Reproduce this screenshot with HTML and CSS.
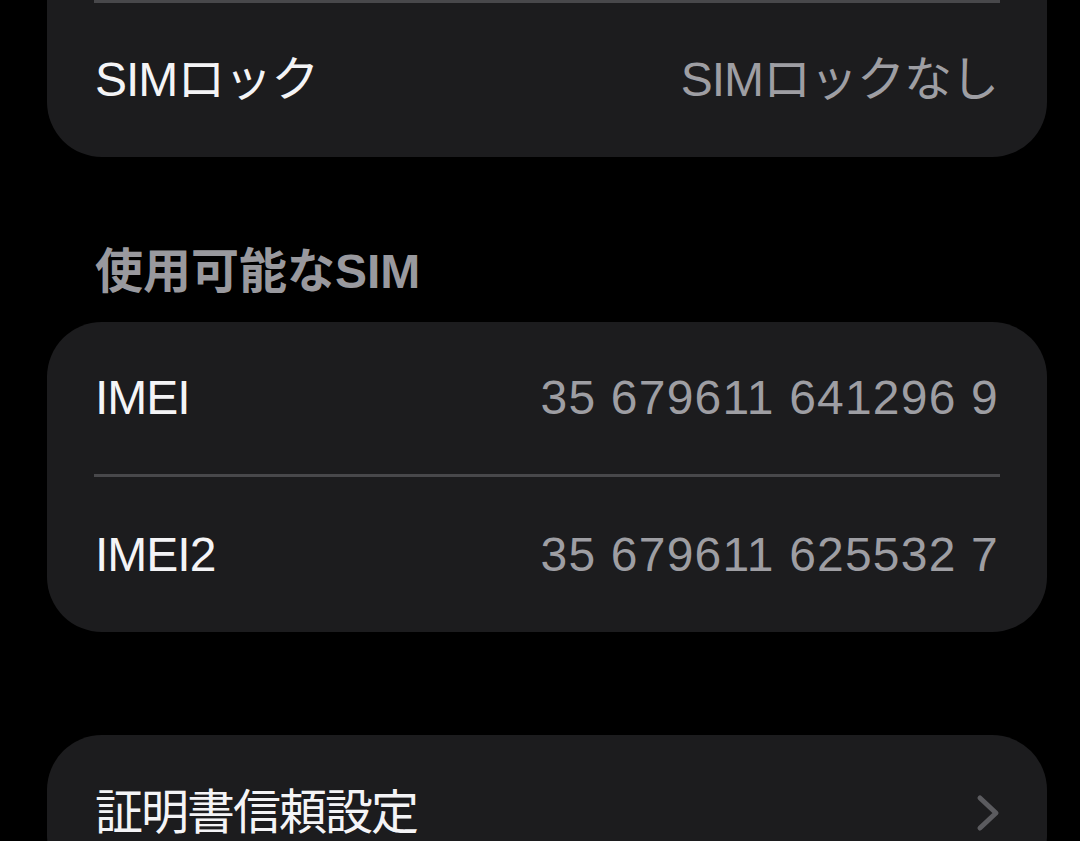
FILE: index.html
```html
<!DOCTYPE html>
<html lang="ja">
<head>
<meta charset="utf-8">
<title>SIM</title>
<link rel="stylesheet" href="styles.css">
</head>
<body>
<main class="page">
  <section class="card card-top">
    <div class="sep"></div>
    <div class="row row-a">
      <span class="label">SIMロック</span>
      <span class="value">SIMロックなし</span>
    </div>
  </section>

  <h2 class="section-header">使用可能なSIM</h2>

  <section class="card">
    <div class="row row-b">
      <span class="label">IMEI</span>
      <span class="value num">35 679611 641296 9</span>
    </div>
    <div class="sep"></div>
    <div class="row row-c">
      <span class="label">IMEI2</span>
      <span class="value num">35 679611 625532 7</span>
    </div>
  </section>

  <section class="card card-last">
    <div class="row row-d">
      <span class="label label-cjk">証明書信頼設定</span>
      <svg class="chevron" width="24" height="38" viewBox="0 0 24 38" aria-hidden="true">
        <polyline points="4,4 20,19 4,34" fill="none" stroke="#5b5b5f" stroke-width="5" stroke-linecap="round" stroke-linejoin="round"/>
      </svg>
    </div>
  </section>
</main>
</body>
</html>
```
FILE: styles.css
```css
html, body {
  margin: 0;
  padding: 0;
  background: #000;
  overflow: hidden;
}

body {
  width: 1080px;
  height: 841px;
  font-family: "Liberation Sans", "Noto Sans CJK JP", sans-serif;
  -webkit-font-smoothing: antialiased;
}

.page {
  height: 841px;
  overflow: hidden;
  padding: 0 33px 0 47px;
  display: flex;
  flex-direction: column;
}

.card {
  flex-shrink: 0;
  background: #1c1c1e;
  border-radius: 55px;
  display: flex;
  flex-direction: column;
}

.card-top {
  border-radius: 0 0 55px 55px;
}

.card-last {
  margin-top: 103px;
}

.sep {
  height: 3px;
  margin: 0 47px 0 47px;
  background: #48484b;
}

.row {
  display: flex;
  align-items: center;
  justify-content: space-between;
  padding: 0 49px 0 48px;
}

.row-a { height: 154px; }
.row-b { height: 152px; }
.row-c { height: 155px; }
.row-d { height: 155px; }

.label {
  font-size: 48px;
  line-height: 1;
  color: #f4f4f6;
  letter-spacing: -1px;
  white-space: nowrap;
}

.label-cjk {
  letter-spacing: -2px;
}

.value {
  font-size: 48px;
  line-height: 1;
  color: #9e9ea3;
  letter-spacing: -1px;
  white-space: nowrap;
}

.value.num {
  letter-spacing: 1.2px;
  margin-right: -1px;
}

.section-header {
  flex-shrink: 0;
  margin: 0;
  padding: 85px 0 20px 48px;
  height: 60px;
  line-height: 60px;
  font-size: 48px;
  font-weight: 700;
  color: #99999e;
  white-space: nowrap;
}

.chevron {
  display: block;
  margin-right: -2px;
}
```
